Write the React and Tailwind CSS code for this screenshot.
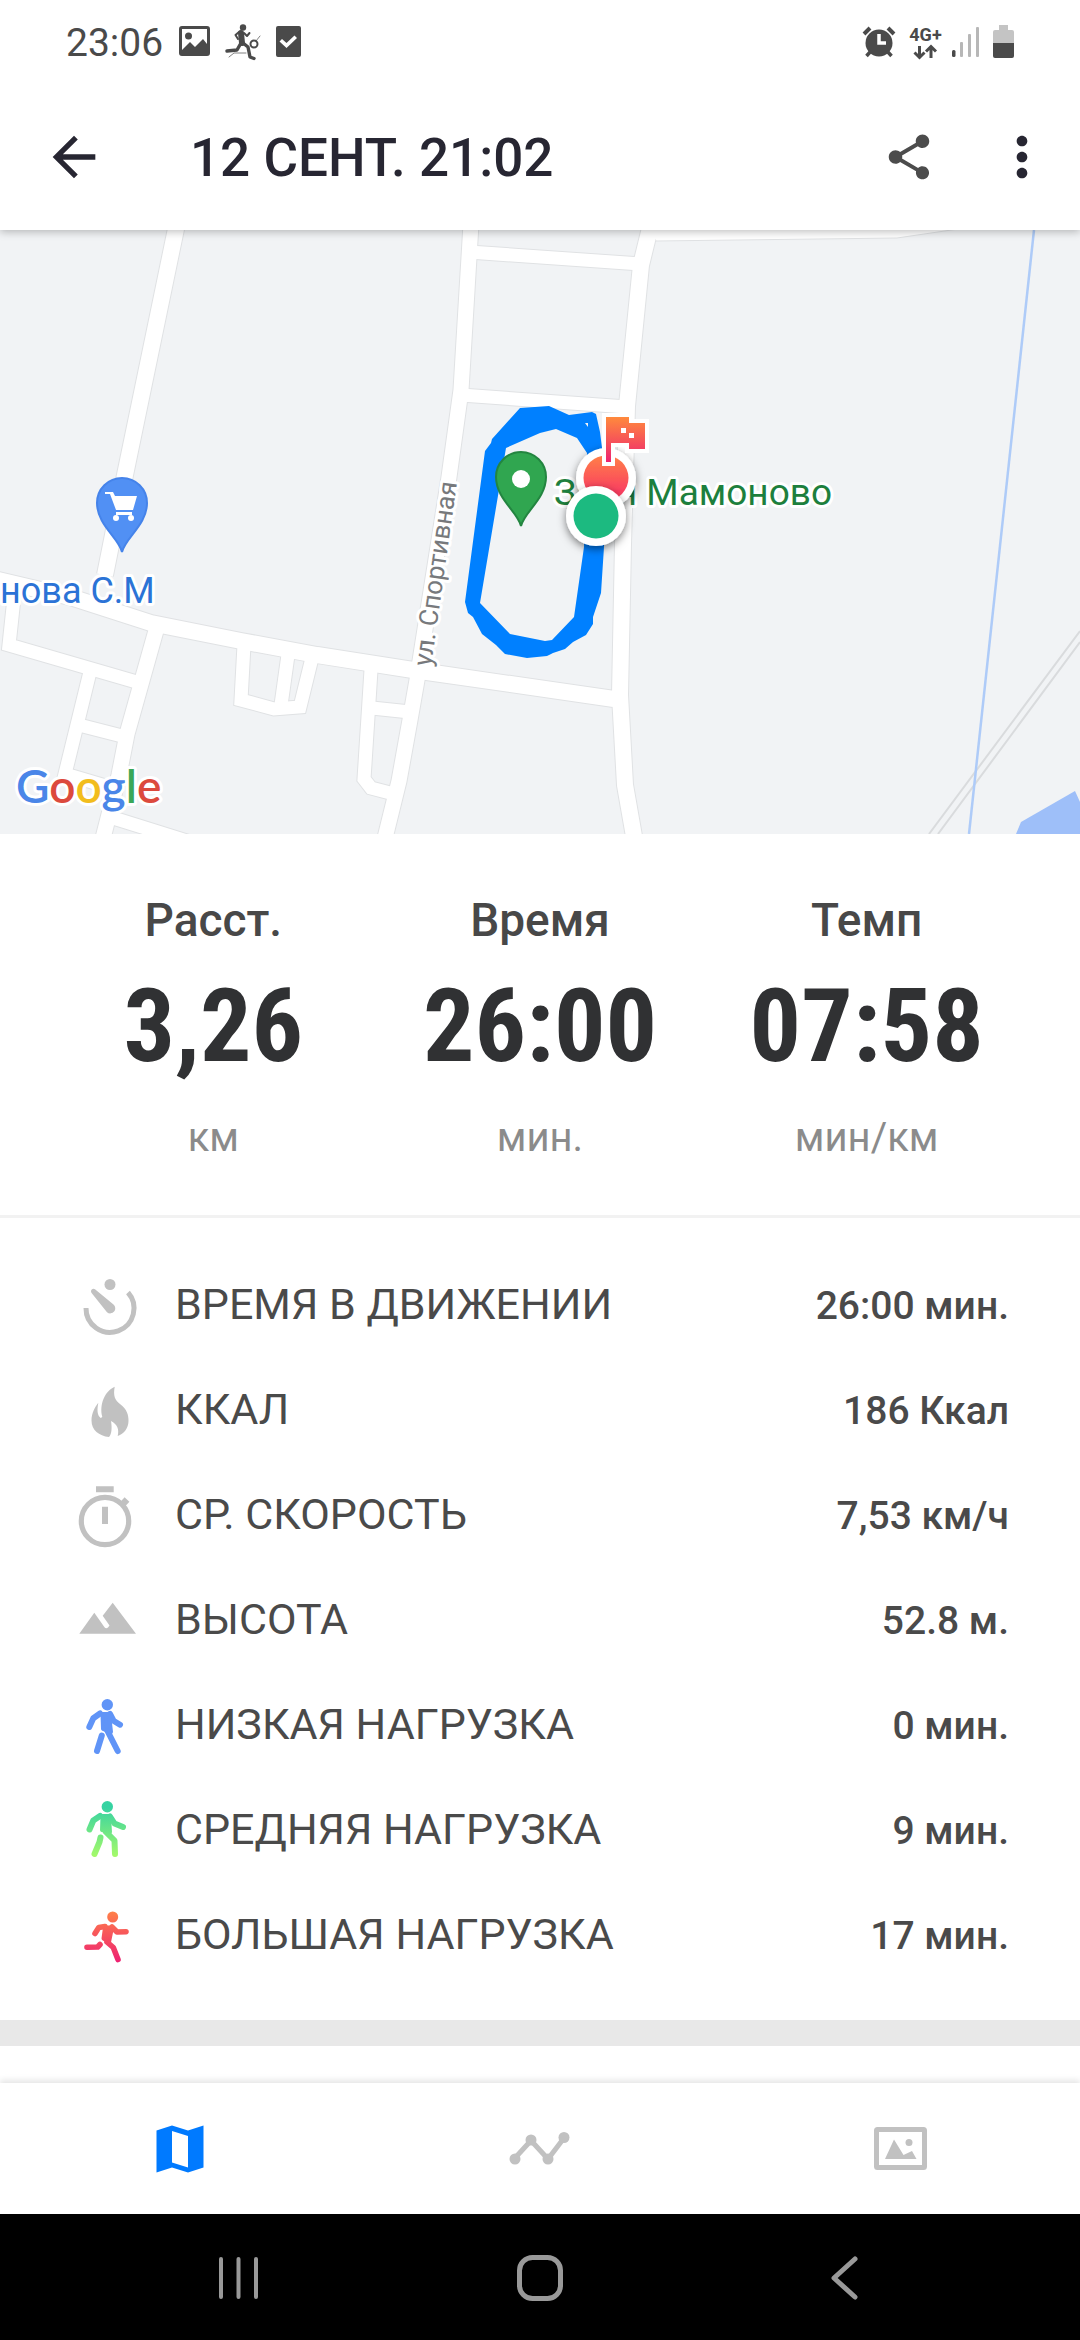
import React from 'react';
import { MdArrowBack, MdMoreVert, MdShare } from 'react-icons/md';

const stats = [
  { label: 'Расст.', value: '3,26', unit: 'км' },
  { label: 'Время', value: '26:00', unit: 'мин.' },
  { label: 'Темп', value: '07:58', unit: 'мин/км' },
];

const TimerIcon = () => (
  <>
    <path d="M17 39A24 24 0 1 0 59 23.5" fill="none" stroke="#c1c1c1" strokeWidth="5" />
    <circle cx="41" cy="15.5" r="5.5" fill="#c1c1c1" />
    <path d="M22.4 23.8A2.6 2.6 0 0 1 26 20.2L44.5 35.5A5 5 0 0 1 38 43.2Z" fill="#c1c1c1" />
  </>
);

const FlameIcon = () => (
  <path
    d="M45.7 12.7C44 22 46 26 51 30C58 35 59.5 41 59.5 47C59.5 54 55 60 48.7 62C50.5 55 48 50 42 47C43 53 43 60 40 63C30 62 22.5 56 22.5 46.5C22.5 39 26 33 29.3 28.7C28 36 28 41 31.7 44L33.3 43C30 30 36 17 45.7 12.7Z"
    fill="#c1c1c1"
  />
);

const StopwatchIcon = () => (
  <>
    <circle cx="36" cy="42" r="23.7" fill="none" stroke="#c1c1c1" strokeWidth="5.2" />
    <path d="M27 7.3H44.7V13.3H27ZM33 27.7H39V45H33Z" fill="#c1c1c1" />
    <path d="M52 27L58 20.5" stroke="#c1c1c1" strokeWidth="6.5" />
  </>
);

const MountainIcon = () => (
  <path d="M10.3 49.7L25.3 28.7L35.5 43.2Q37 45 39 43.5L40.5 41.5L33.7 31.7L43.7 18.7L67 49.7Z" fill="#c1c1c1" />
);

const WalkSlowIcon = () => (
  <g fill="none" stroke="#6094f7" strokeWidth="6" strokeLinecap="round" strokeLinejoin="round">
    <circle cx="38.3" cy="15.7" r="5.7" fill="#6094f7" stroke="none" />
    <path d="M31 24.5L24.3 29.3L20.3 38M41 25L44.5 31.7L51 35.7M38 41L48.7 62" />
    <path d="M33.5 25H40L42 43L34 40Z" fill="#6094f7" strokeWidth="4" />
    <path d="M32.8 46.5L28 62" />
  </g>
);

const WalkFastIcon = () => (
  <g fill="none" stroke="url(#walk)" strokeWidth="6" strokeLinecap="round" strokeLinejoin="round">
    <defs>
      <linearGradient id="walk" gradientUnits="userSpaceOnUse" x1="0" y1="8" x2="0" y2="62">
        <stop offset="0.1" stopColor="#36d3a2" />
        <stop offset="1" stopColor="#a4f96a" />
      </linearGradient>
    </defs>
    <circle cx="38.3" cy="12.7" r="5.7" fill="url(#walk)" stroke="none" />
    <path d="M31 22L24.3 26.5L20.5 35.5M41 22.5L45.5 29.5L54 33M37 38L45.5 46.5L46 60" />
    <path d="M33.5 22H40L41 38L33 36Z" fill="url(#walk)" strokeWidth="4" />
    <path d="M31.5 43.5L30.5 48L25.5 60" />
  </g>
);

const RunIcon = () => (
  <g fill="none" stroke="url(#run)" strokeWidth="5.6" strokeLinecap="round" strokeLinejoin="round">
    <defs>
      <linearGradient id="run" gradientUnits="userSpaceOnUse" x1="0" y1="12" x2="0" y2="62">
        <stop offset="0" stopColor="#ff8148" />
        <stop offset="1" stopColor="#ee2372" />
      </linearGradient>
    </defs>
    <circle cx="43.7" cy="18" r="5.5" fill="url(#run)" stroke="none" />
    <path d="M36 27.5L29.8 28.5L26 34.5M43 28L48 33L57 32.7M38 43L44.3 48.5L49 60.5" />
    <path d="M36 28.5H43L40 43L34.5 39.5Z" fill="url(#run)" strokeWidth="4" />
    <path d="M31 45.5L28.7 48L18 48.2" />
  </g>
);

const details = [
  { icon: TimerIcon, label: 'ВРЕМЯ В ДВИЖЕНИИ', value: '26:00 мин.' },
  { icon: FlameIcon, label: 'ККАЛ', value: '186 Ккал' },
  { icon: StopwatchIcon, label: 'СР. СКОРОСТЬ', value: '7,53 км/ч' },
  { icon: MountainIcon, label: 'ВЫСОТА', value: '52.8 м.' },
  { icon: WalkSlowIcon, label: 'НИЗКАЯ НАГРУЗКА', value: '0 мин.' },
  { icon: WalkFastIcon, label: 'СРЕДНЯЯ НАГРУЗКА', value: '9 мин.' },
  { icon: RunIcon, label: 'БОЛЬШАЯ НАГРУЗКА', value: '17 мин.' },
];

const roads = [
  { d: 'M177 -6L125 245L105 345', width: 16 },
  { d: 'M-6 349L70 367L151 393L241 411L317 425L413 440L614 469', width: 16 },
  { d: 'M14 368L9 415L140 453', width: 13 },
  { d: 'M157 397L127 504L119 545L102 612', width: 15 },
  { d: 'M90 442L65 544L119 560', width: 13 },
  { d: 'M79 495L122 506', width: 13 },
  { d: 'M110 587L190 612', width: 13 },
  { d: 'M244 415L241 470L274 479L300 477L312 428', width: 13 },
  { d: 'M288 425L281 475', width: 13 },
  { d: 'M471 -6L461 160L449 247L417 450L410 490L399 551L384 612', width: 15 },
  { d: 'M371 440L364 549L371 558L394 564', width: 13 },
  { d: 'M372 478L410 482', width: 13 },
  { d: 'M469 22L641 34', width: 13 },
  { d: 'M461 165L627 177', width: 13 },
  { d: 'M651 -6L641 35L627 176L623 314L620 465L625 555L635 612', width: 16 },
];

const StatusBar = () => (
  <div className="relative z-20 flex h-[84px] items-center justify-between bg-white pr-[66px] pl-[66px] text-[#4a4a4a]">
    <div className="flex items-center">
      <span className="w-[110px] pt-0.5 text-[39px]">23:06</span>
      <svg className="h-[60px] w-[130px]" viewBox="176 12 130 60" fill="currentColor">
        <path fillRule="evenodd" d="M182 26H207Q210 26 210 29V53Q210 56 207 56H182Q179 56 179 53V29Q179 26 182 26ZM182 29V50L190 42L195 47L203 39L207 44V29Z" />
        <circle cx="188.500" cy="36" r="3.500" />
        <circle cx="243" cy="27.500" r="3.200" />
        <g fill="none" stroke="currentColor" strokeLinecap="round" strokeLinejoin="round">
          <path d="M241 33L242 43" strokeWidth="6" />
          <path d="M239 32L235.500 35L238 39M244 33L247 36L249.500 33" strokeWidth="2" />
          <path d="M241 43L237 50L227 51M243 43L248 47L250 57L254 58.500" strokeWidth="3.400" />
          <circle cx="254" cy="44" r="3.500" strokeWidth="2" />
          <path d="M256 41L260 36M229 57L234 53H246" strokeWidth="0.700" />
        </g>
        <path fillRule="evenodd" d="M278 26H299Q301 26 301 28V55Q301 57 299 57H278Q276 57 276 55V28Q276 26 278 26ZM279.500 41.500L286.500 48L297 38L294.500 35.500L286.500 43L282 39Z" />
      </svg>
    </div>
    <svg className="h-[60px] w-[154px]" viewBox="860 12 154 60" fill="currentColor">
      <circle cx="879" cy="43" r="13.500" />
      <g fill="none" stroke="currentColor" strokeWidth="4">
        <path d="M864 34L870 28M894 34L888 28" />
        <path d="M866.500 56L871 51M891.500 56L887 51" strokeWidth="3.500" />
        <path d="M879 34V43H886" stroke="#fff" strokeWidth="3.500" />
        <path d="M919.500 46V57M914.500 52.500L919.500 57.500L924.500 52.500M931 58V47M926 51.500L931 46.500L936 51.500" strokeWidth="3" />
      </g>
      <text x="925.500" y="40.500" textAnchor="middle" fontSize="18" fontWeight="700">4G+</text>
      <rect x="952" y="50" width="3.500" height="7" rx="1.500" />
      <g fill="#b7b7b7">
        <rect x="960" y="42" width="3" height="15" rx="1" />
        <rect x="968" y="34" width="3" height="23" rx="1" />
        <rect x="976" y="27" width="3" height="30" rx="1" />
      </g>
      <path d="M999 25H1008V30H1012Q1014 30 1014 32V43H993V32Q993 30 995 30H999Z" fill="#c4c4c4" />
      <path d="M993 43H1014V56Q1014 58 1012 58H995Q993 58 993 56Z" />
    </svg>
  </div>
);

const Header = () => (
  <header className="relative z-10 flex h-[146px] items-center bg-white pr-[26px] pl-[42px] text-[#272632] shadow-[0_2px_8px_rgba(0,0,0,0.25)]">
    <button type="button" aria-label="Назад">
      <MdArrowBack size={64} />
    </button>
    <h1 className="flex-1 pt-1 pl-[84px] text-[53px] font-medium">12 СЕНТ. 21:02</h1>
    <button type="button" aria-label="Поделиться" className="mr-[54px] text-[#4c4c4c]">
      <MdShare size={54} />
    </button>
    <button type="button" aria-label="Ещё">
      <MdMoreVert size={64} />
    </button>
  </header>
);

const RouteMap = () => (
  <svg className="block h-[604px] w-full bg-[#f1f3f5]" viewBox="0 0 1080 604" preserveAspectRatio="xMidYMid slice">
    <defs>
      <linearGradient id="finish" gradientUnits="userSpaceOnUse" x1="0" y1="225" x2="0" y2="270">
        <stop offset="0" stopColor="#ff8148" />
        <stop offset="0.8" stopColor="#fa4060" />
      </linearGradient>
      <linearGradient id="flag" gradientUnits="userSpaceOnUse" x1="0" y1="187" x2="0" y2="232">
        <stop offset="0" stopColor="#ff8a3c" />
        <stop offset="1" stopColor="#ee2372" />
      </linearGradient>
      <filter id="shadow" x="-50%" y="-50%" width="200%" height="200%">
        <feDropShadow dx="0" dy="3" stdDeviation="4" floodOpacity="0.5" />
      </filter>
    </defs>

    {/* roads: grey casing first, white surface on top */}
    <g fill="none" stroke="#e0e2e4">
      {roads.map((road) => (
        <path key={road.d} d={road.d} strokeWidth={road.width + 2} />
      ))}
    </g>
    <path d="M649 -2L656 11L897 8L965 -2Z" fill="#fff" stroke="#e0e2e4" />
    <g fill="none" stroke="#fff">
      {roads.map((road) => (
        <path key={road.d} d={road.d} strokeWidth={road.width} />
      ))}
    </g>

    <path d="M1080 401L929 604M1080 412L938 604" stroke="#d9dbdd" strokeWidth="2" />
    <path d="M1034 0L969 604" stroke="#aecbf8" strokeWidth="2.500" />
    <path d="M1016 604L1021 592L1075 561L1080 572V604Z" fill="#9ebff9" />

    {/* track */}
    <path
      fill="#0080ff"
      fillRule="evenodd"
      d="M520 178L549 176L569 185L592 182L596 184L600 202L606 250L604 317L601 363L593 387L593 394L586 405L573 412L565 419L553 423L547 426L527 428L505 424L496 415L482 404L473 387L468 383L465 372L485 221L491 213L492 209ZM506 218L480 373L510 404L545 411L552 410L574 387L584 317L587 223L577 208L556 199L540 203ZM585 193L588 193L588 197Z"
    />

    <g stroke="#fff" strokeWidth="6" strokeLinejoin="round" paintOrder="stroke">
      <text x="431" y="437" fontSize="26" fill="#77797c" transform="rotate(-82 431 437)">ул. Спортивная</text>
      <text x="554" y="275" fontSize="37" fill="#1d7f3d">Заря Мамоново</text>
      <text x="0" y="373" fontSize="36" fill="#2b73d6">нова С.М</text>
      <text x="16" y="573" fontSize="46" fontWeight="600" fontFamily="Lato, sans-serif">
        <tspan fill="#4a86e8">G</tspan>
        <tspan fill="#dc4a3d">o</tspan>
        <tspan fill="#f2bd1d">o</tspan>
        <tspan fill="#4a86e8">g</tspan>
        <tspan fill="#3aa757">l</tspan>
        <tspan fill="#dc4a3d">e</tspan>
      </text>
    </g>

    <path d="M521 296C518 282 496 269 496 247A25 25 0 0 1 546 247C546 269 524 282 521 296Z" fill="#30a650" stroke="#238540" strokeWidth="2" />
    <circle cx="521" cy="249" r="9" fill="#fff" />
    <path d="M122 322C119 308 97 295 97 273A25 25 0 0 1 147 273C147 295 125 308 122 322Z" fill="#5190f4" stroke="#4583ea" strokeWidth="2" />
    <g fill="#fff">
      <path d="M105 262H113L115 266H137L133 280H116L110 264H105Z" />
      <path d="M116 282H132V285H116Z" />
      <circle cx="116" cy="288" r="3" />
      <circle cx="131" cy="288" r="3" />
    </g>

    <g filter="url(#shadow)">
      <circle cx="606" cy="248" r="30" fill="#fff" />
      <circle cx="606" cy="248" r="22.500" fill="url(#finish)" />
    </g>
    <path
      d="M606 187H629V193H645V219H629V213H611V232H606Z"
      fill="url(#flag)"
      stroke="#fff"
      strokeWidth="8"
      paintOrder="stroke"
    />
    <path d="M621 198H626V203H621ZM629 203H634V208H629Z" fill="#fff" />
    <g filter="url(#shadow)">
      <circle cx="596" cy="286" r="30" fill="#fff" />
      <circle cx="596" cy="286" r="22.500" fill="#1aba80" />
    </g>
  </svg>
);

const Summary = () => (
  <section className="grid h-[384px] grid-cols-3 border-b-3 border-[#f2f2f2] px-[50px] pt-[56px] text-center">
    {stats.map((stat) => (
      <div key={stat.label} className="flex flex-col items-center">
        <span className="text-[46px] leading-[60px] font-medium text-[#484848]">{stat.label}</span>
        <span className="font-['Roboto_Condensed','Liberation_Sans_Narrow',Roboto,sans-serif] text-[102px] leading-[152px] font-bold text-[#303133]">
          {stat.value}
        </span>
        <span className="text-[40px] leading-[72px] text-[#8b8b8b]">{stat.unit}</span>
      </div>
    ))}
  </section>
);

const Details = () => (
  <dl className="pt-[34px] pr-[71px] pb-[33px] pl-[69px] text-[#4a4a4a]">
    {details.map(({ icon: Icon, label, value }) => (
      <div key={label} className="flex h-[105px] items-center">
        <svg className="h-[72px] w-[72px]" viewBox="0 0 72 72">
          <Icon />
        </svg>
        <dt className="flex-1 pl-[34px] text-[43px]">{label}</dt>
        <dd className="pt-1 text-[39px] font-medium">{value}</dd>
      </div>
    ))}
  </dl>
);

const TabBar = () => (
  <nav className="grid h-[131px] grid-cols-3 bg-white text-[#c1c1c1] shadow-[0_-3px_6px_rgba(0,0,0,0.1)]">
    <button type="button" aria-label="Карта" className="flex items-center justify-center text-[#007aff]">
      <svg className="h-[48px] w-[48px]" viewBox="0 0 48 48" fill="currentColor">
        <path fillRule="evenodd" d="M0.500 5.500L16 0.500L32 5.500L47.500 0.500V42.500L32 47.500L16 42.500L0.500 47.500ZM16 6V37.500L32 42.500V11Z" />
      </svg>
    </button>
    <button type="button" aria-label="График" className="flex items-center justify-center">
      <svg className="h-[36px] w-[62px]" viewBox="0 0 62 36" fill="currentColor">
        <path d="M6 27L22 9.500L39 28L55 7" fill="none" stroke="currentColor" strokeWidth="5" />
        <circle cx="6" cy="28" r="5.500" />
        <circle cx="22" cy="9" r="5.500" />
        <circle cx="39" cy="28" r="5.500" />
        <circle cx="55" cy="6.500" r="5.500" />
      </svg>
    </button>
    <button type="button" aria-label="Фото" className="flex items-center justify-center">
      <svg className="h-[43px] w-[53px]" viewBox="0 0 53 43" fill="currentColor">
        <rect x="2.500" y="2.500" width="48" height="38" rx="1" fill="none" stroke="currentColor" strokeWidth="5" />
        <path d="M11 32L20 12.500L29.500 28L38 24L42.500 32Z" />
        <circle cx="35" cy="15.500" r="3.500" />
      </svg>
    </button>
  </nav>
);

const SystemNav = () => (
  <div className="flex h-[126px] items-center justify-between bg-black px-[214px] pt-0.5 text-[#999]">
    <button type="button" aria-label="Последние">
      <svg className="h-[50px] w-[50px]" viewBox="0 0 50 50" stroke="currentColor" strokeWidth="4" strokeLinecap="round">
        <path d="M7 6V44M24.500 6V44M42 6V44" />
      </svg>
    </button>
    <button type="button" aria-label="Домой">
      <svg className="h-[50px] w-[50px]" viewBox="0 0 50 50" fill="none" stroke="currentColor" strokeWidth="5">
        <rect x="4.500" y="4.500" width="41" height="41" rx="13" />
      </svg>
    </button>
    <button type="button" aria-label="Назад">
      <svg className="h-[50px] w-[50px]" viewBox="0 0 50 50" fill="none" stroke="currentColor" strokeWidth="5" strokeLinecap="round" strokeLinejoin="round">
        <path d="M39 6L18 25L39 44" />
      </svg>
    </button>
  </div>
);

const App = () => {
  return (
    <div className="flex min-h-screen flex-col overflow-hidden bg-white font-[Roboto,sans-serif]">
      <StatusBar />
      <Header />
      <main className="flex-1 pb-[37px]">
        <RouteMap />
        <Summary />
        <Details />
        <div className="h-[26px] bg-[#e8e8e8]" />
      </main>
      <TabBar />
      <SystemNav />
    </div>
  );
};

export default App;
